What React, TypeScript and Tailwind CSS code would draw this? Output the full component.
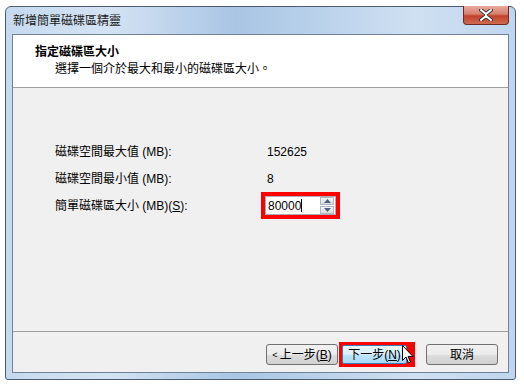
import React from "react";

const font = { fontFamily: '"Liberation Sans", "Noto Sans CJK TC", sans-serif' };

function Cursor() {
  return (
    <svg width="12" height="19" viewBox="0 0 12 19" className="absolute left-[63px] top-[3px]">
      <path d="M0.5 0.5 L0.5 15.5 L4 12 L6.5 18 L8.5 17 L6 11.5 L11 11.5 Z" fill="#fff" stroke="#000" strokeWidth="1" />
    </svg>
  );
}

export default function App() {
  return (
    <div className="w-[524px] h-[388px] bg-white pt-[6px] pl-[5px] text-[12px] text-black" style={font}>
      <div className="w-[511px] h-[374px] rounded-t-[6px] rounded-b-[3px] border border-[#4a5d73] flex flex-col bg-[linear-gradient(90deg,#c6daef_0%,#d4e3f3_20%,#a9c5e4_45%,#b8d0ea_60%,#cfe0f2_80%,#c0d6ee_100%)]">
        <div className="h-[27px] flex items-start justify-between pl-[7px] pr-[6px]">
          <div className="pt-[7px] text-[12px] text-[#1a1a1a] leading-[14px]">新增簡單磁碟區精靈</div>
          <div className="w-[46px] h-[19px] -mt-[1px] rounded-b-[4px] border border-[#6d2b23] border-t-0 bg-[linear-gradient(180deg,#e8a99b_0%,#d8806e_45%,#c2402c_55%,#cf6a50_100%)] flex items-center justify-center">
            <svg width="14" height="12" viewBox="0 0 14 12">
              <path d="M2 1 L7 5 L12 1 M2 11 L7 7 L12 11" stroke="#3a3a3a" strokeWidth="4" fill="none" strokeLinecap="round" />
              <path d="M2 1 L7 5 L12 1 M2 11 L7 7 L12 11 M7 5 L7 7" stroke="#ffffff" strokeWidth="2" fill="none" strokeLinecap="round" />
            </svg>
          </div>
        </div>
        <div className="mx-[6px] h-[339px] border border-[#6e829a] bg-[#f0f0f0] flex flex-col">
          <div className="h-[53px] bg-white border-b border-[#a0a0a0] pl-[22px] pt-[10px]">
            <div className="font-bold leading-[14px]">指定磁碟區大小</div>
            <div className="pl-[20px] mt-[3px] leading-[14px]">選擇一個介於最大和最小的磁碟區大小。</div>
          </div>
          <div className="flex-1 flex flex-col pl-[42px] pt-[50px]">
            <div className="h-[27px] flex items-center">
              <div className="w-[212px]">磁碟空間最大值 (MB):</div>
              <div>152625</div>
            </div>
            <div className="h-[27px] flex items-center">
              <div className="w-[212px]">磁碟空間最小值 (MB):</div>
              <div>8</div>
            </div>
            <div className="h-[27px] flex items-center">
              <div className="w-[206px]">簡單磁碟區大小 (MB)(<span className="underline">S</span>):</div>
              <div className="w-[79px] h-[27px] bg-[#ff0000] p-[4px] flex">
                <div className="flex-1 bg-white border border-[#abadb3] flex items-center pl-[2px]">
                  <span className="flex-1 leading-[14px]">80000<span className="inline-block w-[1px] h-[13px] bg-black align-middle -mt-[2px]" /></span>
                  <div className="w-[15px] h-full flex flex-col justify-center gap-[1px] pr-[1px]">
                    <div className="h-[8px] border border-[#b0b8c4] bg-[linear-gradient(180deg,#f3f3f3,#dcdcdc)] flex items-center justify-center">
                      <svg width="7" height="4" viewBox="0 0 7 4"><path d="M0 4 L3.5 0 L7 4 Z" fill="#4d6185" /></svg>
                    </div>
                    <div className="h-[8px] border border-[#b0b8c4] bg-[linear-gradient(180deg,#f3f3f3,#dcdcdc)] flex items-center justify-center">
                      <svg width="7" height="4" viewBox="0 0 7 4"><path d="M0 0 L3.5 4 L7 0 Z" fill="#4d6185" /></svg>
                    </div>
                  </div>
                </div>
              </div>
            </div>
          </div>
          <div className="h-[41px] border-t border-[#a0a0a0] flex items-start pl-[253px] pt-[10px]">
            <div className="w-[72px] h-[21px] mt-[2px] rounded-[3px] border border-[#707070] bg-[linear-gradient(180deg,#f2f2f2_0%,#ebebeb_50%,#dddddd_51%,#cfcfcf_100%)] flex items-center justify-center leading-[14px]">
              <span className="text-[9px] mr-[2px]">&lt;</span>上一步(<span className="underline">B</span>)
            </div>
            <div className="relative ml-[1px] w-[76px] h-[25px] bg-[#ff0000] p-[3px] pr-[8px]">
              <div className="h-full rounded-[2px] border border-[#3c7fb1] bg-[linear-gradient(180deg,#eaf6fd_0%,#d9f0fc_50%,#bee6fd_51%,#a7d9f5_100%)] flex items-center justify-center leading-[14px]">
                下一步(<span className="underline">N</span>)
              </div>
              <Cursor />
            </div>
            <div className="ml-[11px] w-[72px] h-[21px] mt-[2px] rounded-[3px] border border-[#707070] bg-[linear-gradient(180deg,#f2f2f2_0%,#ebebeb_50%,#dddddd_51%,#cfcfcf_100%)] flex items-center justify-center leading-[14px]">
              取消
            </div>
          </div>
        </div>
      </div>
    </div>
  );
}
